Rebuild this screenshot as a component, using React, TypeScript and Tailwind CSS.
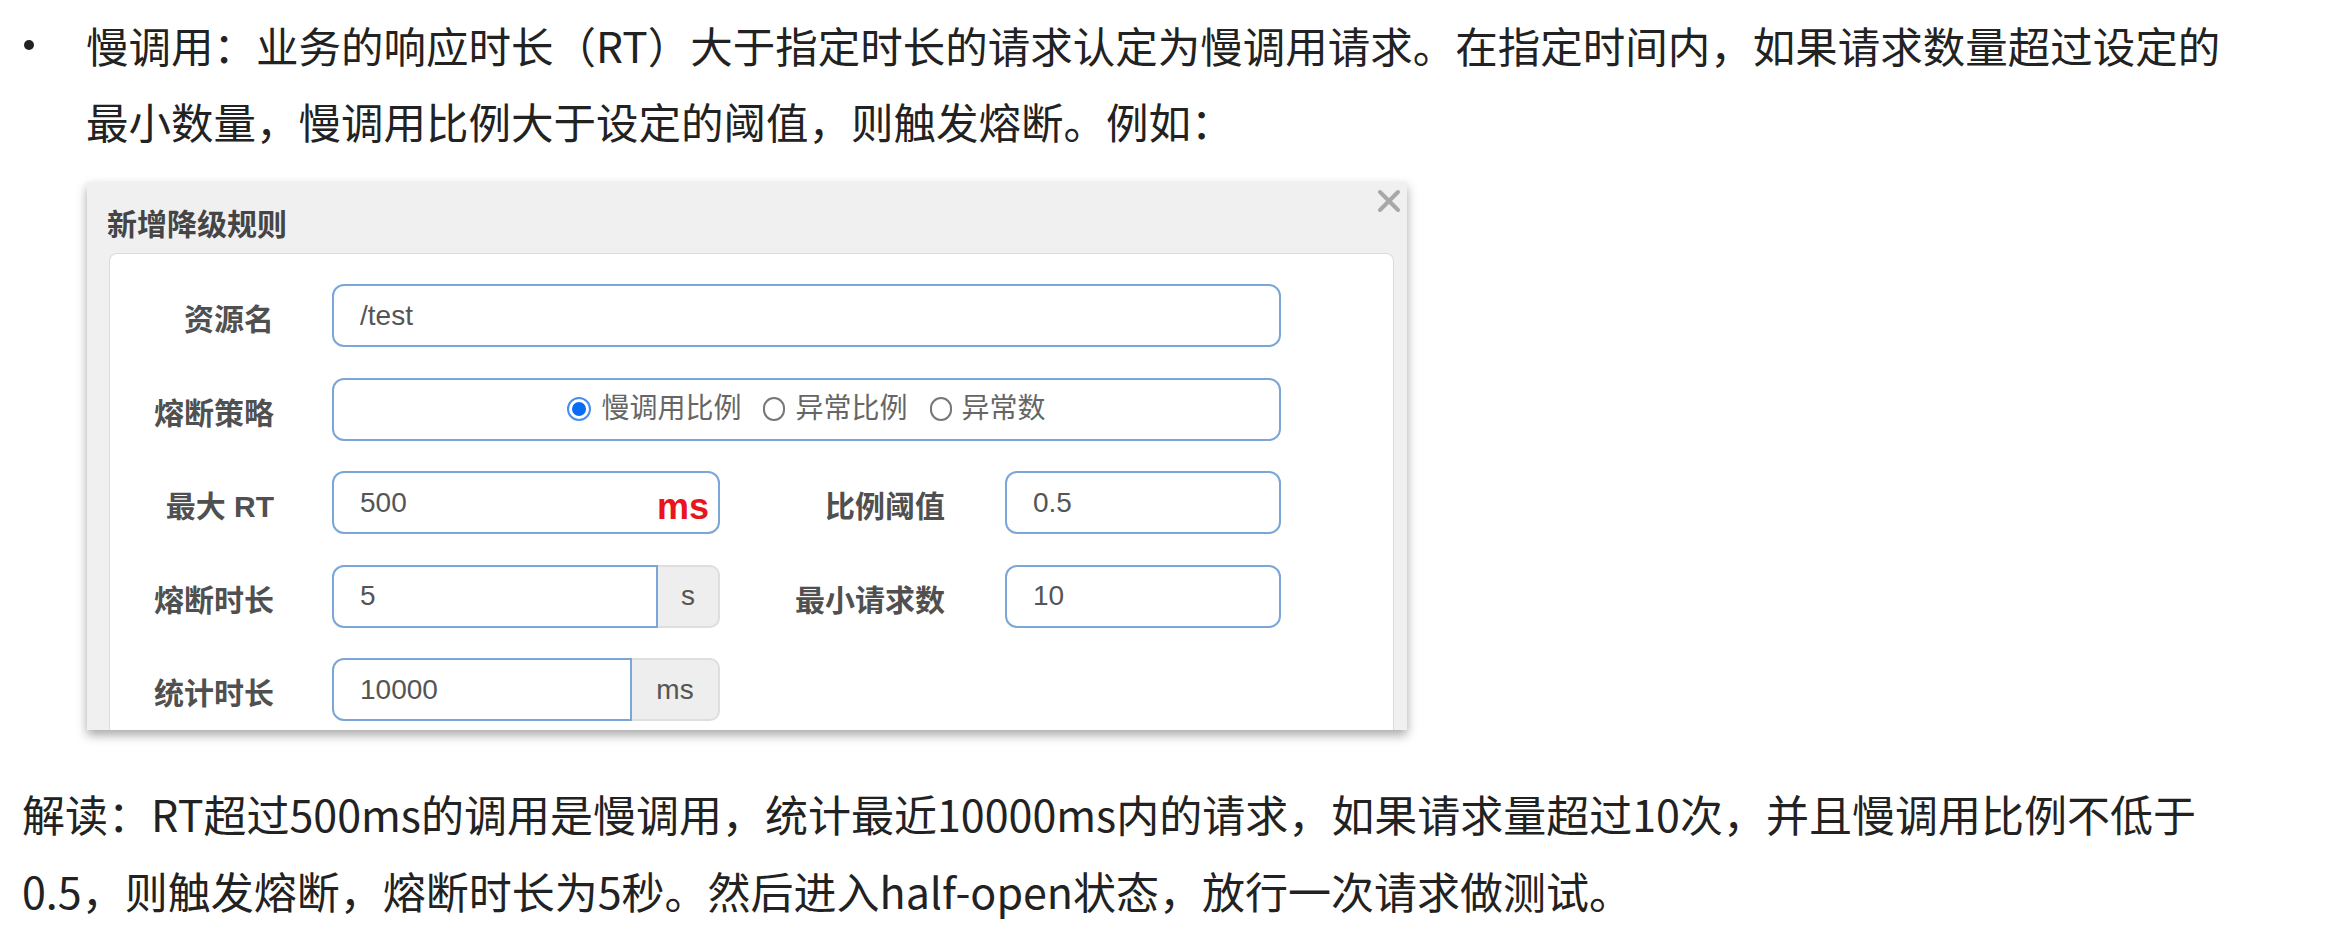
import React from "react";

const body = { fontFamily: '"Noto Sans CJK SC", "Noto Sans", sans-serif' };
const ui = { fontFamily: '"Liberation Sans", "Noto Sans CJK SC", sans-serif' };

function Label({ children }: { children: React.ReactNode }) {
  return (
    <div className="flex items-center justify-end pt-[8px] text-[30px] font-bold text-[#505050] whitespace-nowrap">
      {children}
    </div>
  );
}

function TextInput({ value, suffix }: { value: string; suffix?: React.ReactNode }) {
  return (
    <div className="h-[63px] flex items-center justify-between rounded-[12px] border-2 border-[#7aa6d8] bg-white pl-[26px] pr-[9px] text-[28px] text-[#555]">
      <span>{value}</span>
      {suffix}
    </div>
  );
}

function AddonInput({ value, addon, addonW }: { value: string; addon: string; addonW: string }) {
  return (
    <div className="h-[63px] flex">
      <div className="flex-1 flex items-center rounded-l-[12px] border-2 border-[#7aa6d8] bg-white pl-[26px] text-[28px] text-[#555]">
        {value}
      </div>
      <div
        className={
          "flex items-center justify-center rounded-r-[10px] border-2 border-l-0 border-[#dedede] bg-[#eeeeee] text-[28px] text-[#555] " +
          addonW
        }
      >
        {addon}
      </div>
    </div>
  );
}

function Radio({ checked, label }: { checked?: boolean; label: string }) {
  return (
    <div className="flex items-center gap-[10px]">
      {checked ? (
        <span className="w-[24px] h-[24px] rounded-full border-2 border-[#4a8cf0] bg-white flex items-center justify-center">
          <span className="w-[14px] h-[14px] rounded-full bg-[#0a6cf5]" />
        </span>
      ) : (
        <span className="w-[22px] h-[24px] rounded-full border-2 border-[#777] bg-white" />
      )}
      <span className="text-[28px] text-[#666]">{label}</span>
    </div>
  );
}

export default function App() {
  return (
    <div className="w-[2344px] h-[928px] overflow-hidden bg-white text-[#222]" style={body}>
      <div className="flex pt-[7px]">
        <div className="w-[86px] h-[76px] flex items-center pl-[24px]">
          <span className="w-[10px] h-[10px] rounded-full bg-[#222]" />
        </div>
        <div className="text-[42.5px] leading-[76px] whitespace-nowrap">
          <div>慢调用：业务的响应时长（RT）大于指定时长的请求认定为慢调用请求。在指定时间内，如果请求数量超过设定的</div>
          <div>最小数量，慢调用比例大于设定的阈值，则触发熔断。例如：</div>
        </div>
      </div>

      <div
        className="ml-[87px] mt-[23px] w-[1320px] h-[548px] bg-[#f0f0f0] shadow-[0_5px_10px_rgba(0,0,0,0.35)] flex flex-col overflow-hidden"
        style={ui}
      >
        <div className="h-[71px] flex justify-between shrink-0">
          <div className="pl-[20px] pt-[20px] text-[30px] font-bold text-[#454545]">新增降级规则</div>
          <div className="pr-[6px] pt-[7px]">
            <svg width="24" height="24" viewBox="0 0 24 24">
              <path d="M3 3 L21 21 M21 3 L3 21" stroke="#a8a8a8" strokeWidth="4" strokeLinecap="round" />
            </svg>
          </div>
        </div>
        <div className="flex-1 ml-[22px] mr-[13px] bg-white border border-b-0 border-[#dcdcdc] rounded-t-[8px] pt-[30px]">
          <div className="grid grid-cols-[222px_388px_285px_276px] gap-y-[30.5px]">
            <Label>
              <span className="pr-[58px]">资源名</span>
            </Label>
            <div className="col-span-3 w-[949px]">
              <TextInput value="/test" />
            </div>

            <Label>
              <span className="pr-[58px]">熔断策略</span>
            </Label>
            <div className="col-span-3 w-[949px] h-[63px] flex items-center justify-center gap-[22px] rounded-[12px] border-2 border-[#7aa6d8] bg-white">
              <Radio checked label="慢调用比例" />
              <Radio label="异常比例" />
              <Radio label="异常数" />
            </div>

            <Label>
              <span className="pr-[58px]">最大 RT</span>
            </Label>
            <TextInput
              value="500"
              suffix={<span className="text-[36px] font-bold text-[#e8141e] pt-[8px]">ms</span>}
            />
            <Label>
              <span className="pr-[60px]">比例阈值</span>
            </Label>
            <TextInput value="0.5" />

            <Label>
              <span className="pr-[58px]">熔断时长</span>
            </Label>
            <AddonInput value="5" addon="s" addonW="w-[62px]" />
            <Label>
              <span className="pr-[60px]">最小请求数</span>
            </Label>
            <TextInput value="10" />

            <Label>
              <span className="pr-[58px]">统计时长</span>
            </Label>
            <AddonInput value="10000" addon="ms" addonW="w-[88px]" />
            <div />
            <div />
          </div>
        </div>
      </div>

      <div className="pl-[22px] mt-[45px] text-[43px] leading-[77px] whitespace-nowrap">
        <div>解读：RT超过500ms的调用是慢调用，统计最近10000ms内的请求，如果请求量超过10次，并且慢调用比例不低于</div>
        <div>0.5，则触发熔断，熔断时长为5秒。然后进入half-open状态，放行一次请求做测试。</div>
      </div>
    </div>
  );
}
